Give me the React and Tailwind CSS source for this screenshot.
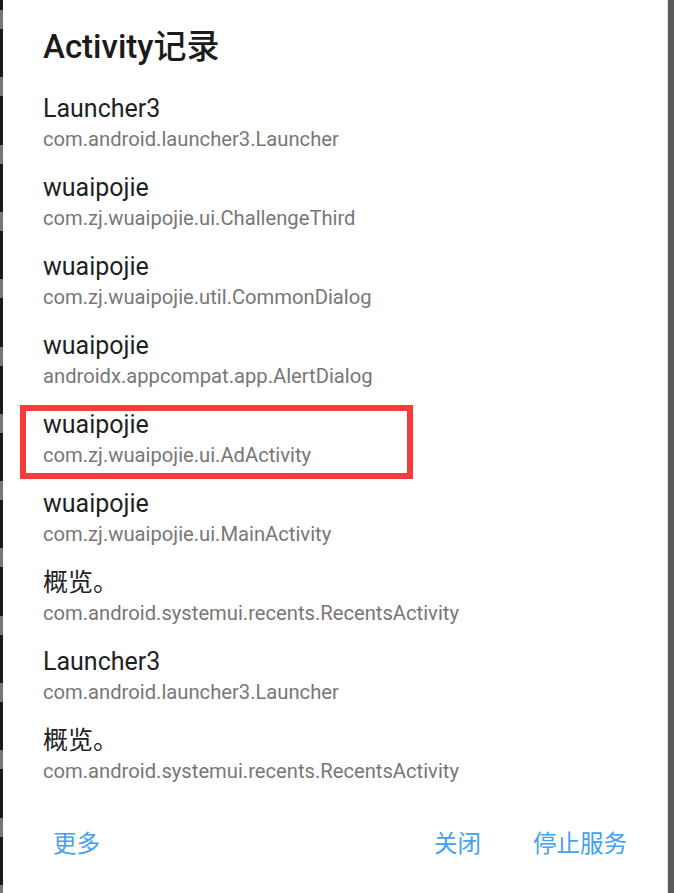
import React from "react";

const records = [
  { label: "Launcher3", name: "com.android.launcher3.Launcher" },
  { label: "wuaipojie", name: "com.zj.wuaipojie.ui.ChallengeThird" },
  { label: "wuaipojie", name: "com.zj.wuaipojie.util.CommonDialog" },
  { label: "wuaipojie", name: "androidx.appcompat.app.AlertDialog" },
  { label: "wuaipojie", name: "com.zj.wuaipojie.ui.AdActivity", marked: true },
  { label: "wuaipojie", name: "com.zj.wuaipojie.ui.MainActivity" },
  { label: "概览。", name: "com.android.systemui.recents.RecentsActivity" },
  { label: "Launcher3", name: "com.android.launcher3.Launcher" },
  { label: "概览。", name: "com.android.systemui.recents.RecentsActivity" },
];

function App() {
  return (
    <div className="flex h-[893px] w-[674px] overflow-hidden bg-white font-['Roboto','Noto_Sans_CJK_SC',sans-serif]">
      {/* dark edge on the left, striped */}
      <div className="w-[3px] shrink-0 bg-[repeating-linear-gradient(to_bottom,#1b1b1b_0px,#1b1b1b_10px,#777_10px,#777_29px,#1b1b1b_29px,#1b1b1b_67.3px)]" />

      <div className="flex flex-1 flex-col">
        <h1 className="px-10 pt-[27px] text-[33px] leading-10 font-medium text-[#1b1b1b]">Activity记录</h1>

        <ul className="mt-[26px] flex flex-col px-10">
          {records.map((r, i) => (
            <li key={i} className="relative h-[79px]">
              <div className="text-[25px] leading-8 text-[#1f1f1f]">{r.label}</div>
              <div className="text-[20.2px] leading-7 text-[#777777]">{r.name}</div>
              {r.marked && (
                <div className="pointer-events-none absolute top-[-4px] left-[-23px] h-[74px] w-[393px] border-[6px] border-[#f53b3b]" />
              )}
            </li>
          ))}
        </ul>

        <div className="mt-[17px] flex h-12 items-center pr-10 pl-[50px] text-[23.5px] text-[#43a1f1]">
          <button>更多</button>
          <div className="flex-1" />
          <button>关闭</button>
          <button className="ml-[52px]">停止服务</button>
        </div>
      </div>

      {/* grey edge on the right */}
      <div className="w-px shrink-0 bg-[#e6e6e6]" />
      <div className="w-[6px] shrink-0 bg-[#5a5a5a]" />
    </div>
  );
}

export default App;
